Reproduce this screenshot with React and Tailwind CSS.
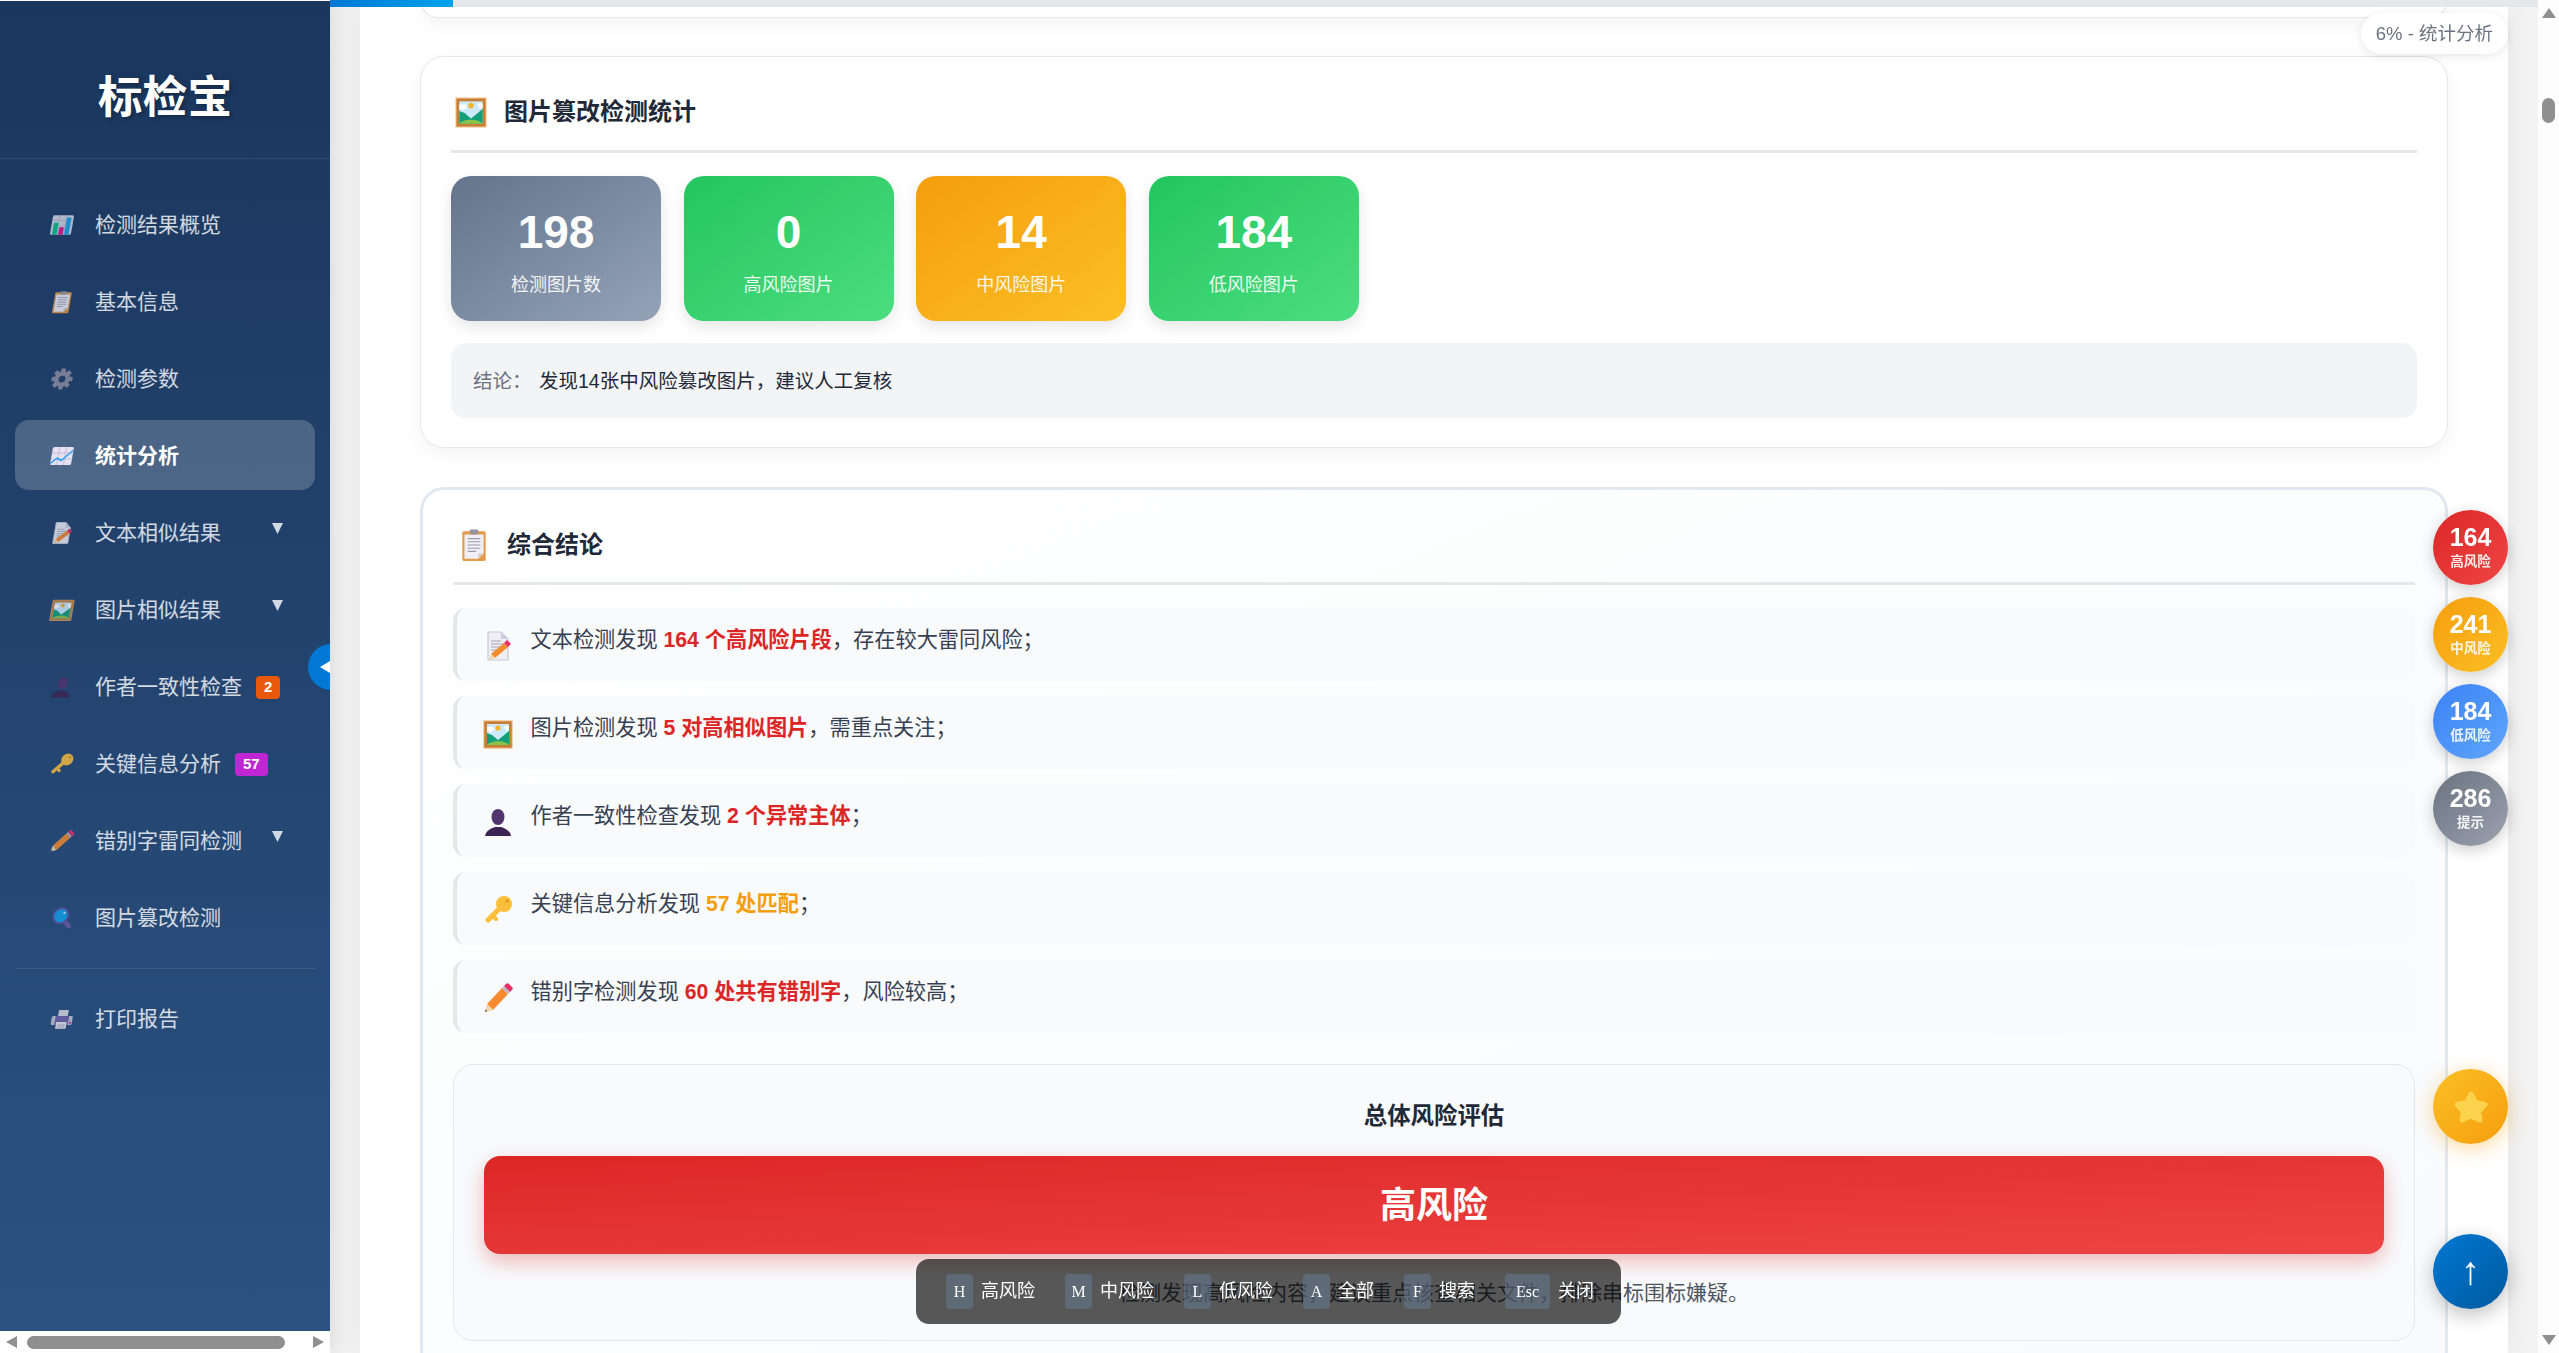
const Chart = () => (
  <>
    <rect x="2" y="3" width="28" height="26" rx="2" fill="#d6d6e4" />
    <path d="M2 10h28M2 17h28M11 3v26M20 3v26" stroke="#b4b4c8" strokeWidth="1" />
    <rect x="5" y="13" width="6" height="16" fill="#00c28a" />
    <rect x="13" y="19" width="6" height="10" fill="#e0148c" />
    <rect x="21" y="6" width="6" height="23" fill="#1ea5e8" />
  </>
)

const Clipboard = () => (
  <>
    <rect x="5" y="3" width="22" height="28" rx="1.5" fill="#e39a4a" />
    <path d="M7 6h18v18l-5 5H7z" fill="#f1eff6" />
    <path d="M25 24l-5 5v-5z" fill="#d9c9c4" />
    <path d="M10 10h12M10 13h12M10 16h12M10 19h12M10 22h8" stroke="#9c9aaa" strokeWidth="1" />
    <rect x="12" y="1.5" width="8" height="4.5" rx="1" fill="#96949f" />
  </>
)

const Gear = () => (
  <g fill="#8d8da0">
    {[0, 45, 90, 135, 180, 225, 270, 315].map(deg => (
      <rect key={deg} x="13" y="2" width="6" height="7" rx="1.5" transform={`rotate(${deg} 16 16)`} />
    ))}
    <circle cx="16" cy="16" r="7.5" fill="none" stroke="#8d8da0" strokeWidth="6" />
  </g>
)

const Trend = () => (
  <>
    <rect x="2" y="4" width="28" height="24" rx="2" fill="#e6e1f2" />
    <path d="M2 12h28M2 20h28M11 4v24M20 4v24" stroke="#b9b5cc" strokeWidth="1" />
    <path d="M2 26l8-7 6 3 14-14" fill="none" stroke="#2a9df4" strokeWidth="2" />
  </>
)

const Memo = () => (
  <>
    <path d="M6 2h13l7 7v21H6z" fill="#eeeef4" stroke="#c9c7d8" strokeWidth="1.2" />
    <path d="M19 2v7h7z" fill="#d0cede" />
    <path d="M9 11h10M9 14h13M9 17h10M9 20h6" stroke="#a3a1b2" strokeWidth="1" />
    <polygon points="9,24 22,13 26,17 13,28" fill="#f68a2e" />
    <polygon points="9,24 13,28 7,30" fill="#f3d6a8" />
    <polygon points="22,13 25,10 29,14 26,17" fill="#ea2e6a" />
  </>
)

const Picture = () => (
  <>
    <rect x="2" y="3" width="28" height="27" fill="#c77f35" />
    <rect x="2" y="3" width="28" height="27" fill="none" stroke="#e8a968" strokeWidth="1" />
    <rect x="5" y="6" width="22" height="21" fill="#cdeafc" />
    <path d="M5 9h6l1 3-3 2-4-1zM22 8h5v4l-3 1z" fill="#ffffff" />
    <circle cx="16" cy="10" r="2.6" fill="#f7b32b" />
    <path d="M5 15l5 2 6 5 5-4 6-5v14H5z" fill="#13a079" />
    <path d="M5 27c4-5 18-5 22 0z" fill="#8bc34a" />
  </>
)

const Bust = () => (
  <>
    <ellipse cx="16" cy="11" rx="6.5" ry="8" fill="#52356f" />
    <path d="M3 30c1-6 7-8 10-9h6c3 1 9 3 10 9z" fill="#3d2452" />
  </>
)

const Key = () => (
  <>
    <path d="M18 14L6 26" stroke="#fbbf3c" strokeWidth="5" strokeLinecap="round" />
    <path d="M11 22l3 3" stroke="#fbbf3c" strokeWidth="4" strokeLinecap="round" />
    <circle cx="22" cy="10" r="8" fill="#fbbf3c" />
    <circle cx="25" cy="7" r="1.8" fill="#e09a20" />
  </>
)

const Pencil = () => (
  <>
    <polygon points="5,22 20,6 26,12 11,28" fill="#f68a2e" />
    <polygon points="5,22 11,28 3,30" fill="#f3d6a8" />
    <polygon points="3.7,27.6 5.2,29 3,30" fill="#3a3a3a" />
    <polygon points="20,6 22,4 28,10 26,12" fill="#b9b9c6" />
    <path d="M22 4l2-2c1-1 2-1 3 0l3 3c1 1 1 2 0 3l-2 2z" fill="#ea2e6a" />
  </>
)

const Magnifier = () => (
  <>
    <path d="M21 21l6 6" stroke="#6b5a9e" strokeWidth="6" strokeLinecap="round" />
    <circle cx="14" cy="13" r="10" fill="#13a0ea" stroke="#5b4fa0" strokeWidth="2.5" />
    <circle cx="18" cy="9" r="1.4" fill="#ffffff" />
  </>
)

const Printer = () => (
  <>
    <rect x="10" y="4" width="13" height="9" fill="#d8d8e0" />
    <rect x="2" y="12" width="28" height="12" rx="2" fill="#c3c3d0" />
    <rect x="7" y="12" width="18" height="12" fill="#6d5fa6" />
    <rect x="9" y="20" width="14" height="9" fill="#e8e8ee" />
    <path d="M11 24h10M11 26.5h10" stroke="#a3a1b2" strokeWidth="1" />
    <circle cx="27.5" cy="21" r="1.4" fill="#e0148c" />
  </>
)

function Emoji({ art: Art, className }) {
  return (
    <svg viewBox="0 0 32 32" className={className}>
      <Art />
    </svg>
  )
}

const navItems = [
  { label: '检测结果概览', art: Chart },
  { label: '基本信息', art: Clipboard },
  { label: '检测参数', art: Gear },
  { label: '统计分析', art: Trend, active: true },
  { label: '文本相似结果', art: Memo, arrow: true },
  { label: '图片相似结果', art: Picture, arrow: true },
  { label: '作者一致性检查', art: Bust, badge: '2', badgeClass: 'bg-[#ea580c]' },
  { label: '关键信息分析', art: Key, badge: '57', badgeClass: 'bg-[#c026d3]' },
  { label: '错别字雷同检测', art: Pencil, arrow: true },
  { label: '图片篡改检测', art: Magnifier },
]

const stats = [
  { value: '198', label: '检测图片数', className: 'from-[#64748b] to-[#94a3b8]' },
  { value: '0', label: '高风险图片', className: 'from-[#22c55e] to-[#4ade80]' },
  { value: '14', label: '中风险图片', className: 'from-[#f59e0b] to-[#fbbf24]' },
  { value: '184', label: '低风险图片', className: 'from-[#22c55e] to-[#4ade80]' },
]

const findings = [
  { art: Memo, before: '文本检测发现 ', strong: '164 个高风险片段', after: '，存在较大雷同风险；' },
  { art: Picture, before: '图片检测发现 ', strong: '5 对高相似图片', after: '，需重点关注；' },
  { art: Bust, before: '作者一致性检查发现 ', strong: '2 个异常主体', after: '；' },
  { art: Key, before: '关键信息分析发现 ', strong: '57 处匹配', after: '；', orange: true },
  { art: Pencil, before: '错别字检测发现 ', strong: '60 处共有错别字', after: '，风险较高；' },
]

const counters = [
  { value: '164', label: '高风险', className: 'from-[#dc2626] to-[#ef4444]' },
  { value: '241', label: '中风险', className: 'from-[#f59e0b] to-[#fbbf24]' },
  { value: '184', label: '低风险', className: 'from-[#3b82f6] to-[#60a5fa]' },
  { value: '286', label: '提示', className: 'from-[#6b7280] to-[#9ca3af]' },
]

const shortcuts = [
  { key: 'H', label: '高风险', width: 'w-[27px]' },
  { key: 'M', label: '中风险', width: 'w-[27px]' },
  { key: 'L', label: '低风险', width: 'w-[27px]' },
  { key: 'A', label: '全部', width: 'w-[27px]' },
  { key: 'F', label: '搜索', width: 'w-[27px]' },
  { key: 'Esc', label: '关闭', width: 'w-[45px]' },
]

function NavItem({ item }) {
  return (
    <div
      className={`flex h-[70px] items-center rounded-[14px] pl-[32px] pt-[2px] text-[21px] ${
        item.active ? 'bg-white/20 font-bold text-white' : 'text-white/80'
      }`}
    >
      <div className="mr-[18px] flex w-[30px] justify-center">
        <Emoji
          art={item.art}
          className={`h-[24px] w-[24px] -skew-x-[10deg] ${item.active ? '' : 'opacity-80'}`}
        />
      </div>
      <span>{item.label}</span>
      {item.badge && (
        <span
          className={`ml-[14px] flex h-[23px] items-center rounded-[4px] px-[8px] text-[15px] font-bold text-white ${item.badgeClass}`}
        >
          {item.badge}
        </span>
      )}
      {item.arrow && (
        <svg viewBox="0 0 11 11" className="mb-[9px] ml-auto mr-[32px] h-[11px] w-[11px]">
          <polygon points="0,0 11,0 5.5,11" fill="#d3d9e3" />
        </svg>
      )}
    </div>
  )
}

function Sidebar() {
  return (
    <aside className="z-10 flex h-full w-[330px] shrink-0 flex-col bg-white pt-px shadow-[4px_0_20px_rgba(0,0,0,0.1)]">
      <div className="flex-1 bg-linear-to-b from-[#1a365d] to-[#2c5282]">
        <div className="flex h-[158px] items-center justify-center border-b border-white/10 pt-[36px] text-[44.8px] font-bold leading-none text-white [text-shadow:2px_2px_4px_rgba(0,0,0,0.3)]">
          标检宝
        </div>
        <nav className="flex flex-col gap-[7px] px-[15px] pt-[30px]">
          {navItems.map(item => (
            <NavItem key={item.label} item={item} />
          ))}
          <div className="my-[9px] border-t border-white/10" />
          <div className="-mt-[2px]">
            <NavItem item={{ label: '打印报告', art: Printer }} />
          </div>
        </nav>
      </div>
      <div className="flex h-[22px] shrink-0 items-center bg-white pl-[6px] pr-[6px]">
        <svg viewBox="0 0 11 12" className="h-[12px] w-[11px]">
          <polygon points="11,0 11,12 0,6" fill="#8f8f8f" />
        </svg>
        <div className="ml-[10px] h-[13px] w-[258px] rounded-full bg-[#8f8f8f]" />
        <svg viewBox="0 0 11 12" className="ml-auto h-[12px] w-[11px]">
          <polygon points="0,0 0,12 11,6" fill="#8f8f8f" />
        </svg>
      </div>
    </aside>
  )
}

function SectionTitle({ art, text, wrapClass, gapClass, iconClass }) {
  return (
    <div className={`flex h-[36px] items-center ${wrapClass}`}>
      <Emoji art={art} className={`${iconClass} ${gapClass}`} />
      <h2 className="text-[24px] font-bold text-[#1f2937]">{text}</h2>
    </div>
  )
}

function ImageStats() {
  return (
    <section className="mt-[38px] h-[392px] shrink-0 rounded-[24px] border border-[#e5e7eb] bg-white px-[30px] pt-[37px] shadow-[0_6px_20px_rgba(0,0,0,0.05)]">
      <SectionTitle art={Picture} text="图片篡改检测统计" wrapClass="pl-[3px]" gapClass="mr-[16px]" iconClass="h-[34px] w-[34px]" />
      <div className="mb-[23px] mt-[20px] h-[3px] bg-[#e5e7eb]" />
      <div className="flex gap-[22.6px]">
        {stats.map(stat => (
          <div
            key={stat.label}
            className={`flex h-[145px] w-[210px] flex-col items-center rounded-[20px] bg-linear-to-br pt-[29px] text-white shadow-[0_6px_16px_rgba(0,0,0,0.1)] ${stat.className}`}
          >
            <div className="text-[46px] font-bold leading-[54px]">{stat.value}</div>
            <div className="mt-[13px] text-[18px] leading-[26px] opacity-90">{stat.label}</div>
          </div>
        ))}
      </div>
      <div className="mt-[22px] flex h-[75px] items-center rounded-[15px] bg-[#f3f4f6] pl-[22px] pt-[2px] text-[19.5px]">
        <span className="w-[66px] text-[#6b7280]">结论：</span>
        <span className="text-[#1f2937]">发现14张中风险篡改图片，建议人工复核</span>
      </div>
    </section>
  )
}

function Summary() {
  return (
    <section className="mt-[39px] shrink-0 rounded-[24px] border-[3px] border-[#e2e8f0] bg-linear-to-br from-white to-[#f8fafc] px-[30px] pb-[30px] pt-[35px]">
      <SectionTitle art={Clipboard} text="综合结论" wrapClass="pl-[4px] pt-[3px]" gapClass="mr-[16px]" iconClass="h-[34px] w-[34px]" />
      <div className="mb-[23px] mt-[21px] h-[3px] bg-[#e5e7eb]" />
      <div className="flex flex-col gap-[15px]">
        {findings.map(row => (
          <div
            key={row.before}
            className="flex h-[73px] items-start rounded-[13px] border-l-[4px] border-[#e5e7eb] bg-[#f9fafb] pl-[25px] pt-[17px]"
          >
            <Emoji art={row.art} className="mr-[16.5px] mt-[5px] h-[32px] w-[32px] shrink-0" />
            <p className="text-[21.2px] leading-[30px] text-[#374151]">
              {row.before}
              <strong className={`font-bold ${row.orange ? 'text-[#f59e0b]' : 'text-[#dc2626]'}`}>
                {row.strong}
              </strong>
              {row.after}
            </p>
          </div>
        ))}
      </div>
      <div className="mt-[31px] rounded-[20px] border border-[#e2e8f0] bg-[#f8fafc] px-[30px] pb-[32px] pt-[34px] text-center">
        <div className="pt-[2px] text-[23.4px] font-bold leading-[30px] text-[#1f2937]">总体风险评估</div>
        <div className="mt-[25px] flex h-[98px] items-center justify-center rounded-[16px] bg-linear-to-br from-[#dc2626] to-[#ef4444] pt-[2px] text-[36px] font-bold text-white shadow-[0_8px_20px_rgba(220,38,38,0.3)]">
          高风险
        </div>
        <p className="mt-[24px] text-[21px] leading-[30px] text-[#4b5563]">
          检测发现高风险内容，建议重点核查相关文件，排除串标围标嫌疑。
        </p>
      </div>
    </section>
  )
}

function Floating() {
  return (
    <>
      <div className="fixed left-[330px] right-[21px] top-0 z-20 h-[7px] bg-[#e5e7eb]">
        <div className="h-full w-[123px] bg-linear-to-r from-[#0078d4] to-[#00a2ed]" />
      </div>
      <div className="fixed right-[51px] top-[13px] z-20 flex h-[41px] items-center rounded-full bg-white px-[15px] text-[18.5px] text-[#6b7280] shadow-[0_2px_10px_rgba(0,0,0,0.1)]">
        6% - 统计分析
      </div>
      <div className="fixed left-[308px] top-[644px] z-20 h-[46px] w-[22px] overflow-hidden">
        <div className="flex h-[46px] w-[46px] items-center rounded-full bg-[#0078d4] pl-[12px]">
          <svg viewBox="0 0 10 12" className="h-[12px] w-[10px]">
            <polygon points="10,0 10,12 0,6" fill="#ffffff" />
          </svg>
        </div>
      </div>
      <div className="fixed right-[51px] top-[510px] z-20 flex flex-col gap-[12px]">
        {counters.map(item => (
          <div
            key={item.value + item.label}
            className={`flex h-[75px] w-[75px] flex-col items-center justify-center rounded-full bg-linear-to-br text-white shadow-[0_4px_15px_rgba(0,0,0,0.2)] ${item.className}`}
          >
            <div className="text-[25px] font-bold leading-[29px]">{item.value}</div>
            <div className="text-[13.5px] font-bold leading-[20px] opacity-90">{item.label}</div>
          </div>
        ))}
      </div>
      <div className="fixed right-[51px] top-[1069px] z-20 flex h-[75px] w-[75px] items-center justify-center rounded-full bg-linear-to-br from-[#fbbf24] to-[#f59e0b] shadow-[0_4px_20px_rgba(245,158,11,0.4)]">
        <svg viewBox="0 0 36 34" className="h-[34px] w-[36px]">
          <polygon
            points="18,4 22.5,12.5 32,14.5 25.5,21.5 27,30 18,26 9,30 10.5,21.5 4,14.5 13.5,12.5"
            fill="#fcd34d"
            stroke="#fcd34d"
            strokeWidth="5"
            strokeLinejoin="round"
          />
        </svg>
      </div>
      <div className="fixed right-[51px] top-[1234px] z-20 flex h-[75px] w-[75px] items-center justify-center rounded-full bg-linear-to-br from-[#0078d4] to-[#005a9e] text-[39px] font-light text-white shadow-[0_6px_20px_rgba(0,0,0,0.25)]">
        ↑
      </div>
      <div className="fixed left-[916px] top-[1259px] z-20 flex h-[65px] w-[705px] items-center gap-[30px] rounded-[13px] bg-black/65 pl-[30px] text-[18px] text-white">
        {shortcuts.map(item => (
          <div key={item.key} className="flex items-center gap-[8px]">
            <kbd
              className={`flex h-[35px] items-center justify-center rounded-[4px] bg-[#64748b]/60 font-['Liberation_Serif',serif] text-[16px] ${item.width}`}
            >
              {item.key}
            </kbd>
            <span>{item.label}</span>
          </div>
        ))}
      </div>
    </>
  )
}

export default function App() {
  return (
    <div className="flex h-screen overflow-hidden bg-[#f3f3f3] font-['Liberation_Sans','Noto_Sans_CJK_SC',sans-serif]">
      <Sidebar />
      <main className="flex min-w-0 flex-1 justify-center px-[30px]">
        <div className="flex h-full w-full flex-col overflow-hidden bg-white px-[60px] shadow-[0_0_30px_rgba(0,0,0,0.06)]">
          <div className="h-[18px] shrink-0 rounded-b-[24px] border border-t-0 border-[#e5e7eb] bg-white shadow-[0_6px_20px_rgba(0,0,0,0.05)]" />
          <ImageStats />
          <Summary />
        </div>
      </main>
      <div className="flex h-full w-[21px] shrink-0 flex-col items-center bg-[#fdfdfd] py-[8px]">
        <svg viewBox="0 0 14 10" className="h-[10px] w-[14px]">
          <polygon points="7,0 14,10 0,10" fill="#8f8f8f" />
        </svg>
        <div className="mt-[80px] h-[25px] w-[13px] rounded-full bg-[#8f8f8f]" />
        <svg viewBox="0 0 14 10" className="mt-auto h-[10px] w-[14px]">
          <polygon points="0,0 14,0 7,10" fill="#8f8f8f" />
        </svg>
      </div>
      <Floating />
    </div>
  )
}
